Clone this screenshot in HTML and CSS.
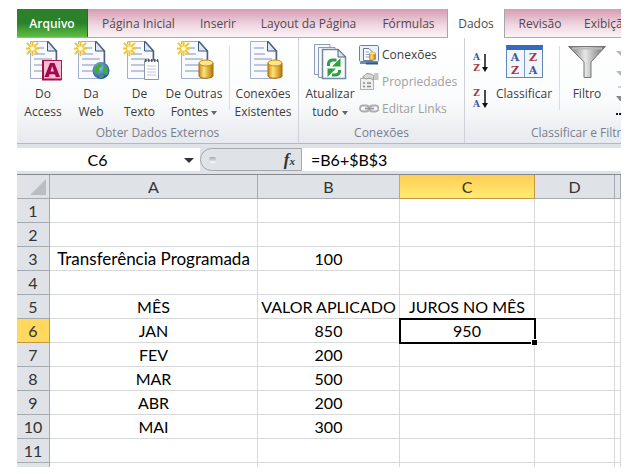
FILE: index.html
```html
<!DOCTYPE html>
<html lang="pt-BR">
  <head>
    <meta charset="utf-8">
    <title>Planilha</title>
    <link rel="stylesheet" href="styles.css">
  </head>
  <body>
    <!-- shared icon parts -->
    <svg class="defs" width="0" height="0" aria-hidden="true">
      <defs>
        <linearGradient id="gold" x1="0" x2="1" y1="0" y2="0">
          <stop offset="0" stop-color="#c98a10" />
          <stop offset="0.35" stop-color="#ffe27a" />
          <stop offset="1" stop-color="#b87405" />
        </linearGradient>
        <linearGradient id="steel" x1="0" x2="1" y1="0" y2="0">
          <stop offset="0" stop-color="#6e6e6e" />
          <stop offset="0.45" stop-color="#e8e8e8" />
          <stop offset="1" stop-color="#6a6a6a" />
        </linearGradient>
        <radialGradient id="sea" cx="0.4" cy="0.35" r="0.7">
          <stop offset="0" stop-color="#8cc4f4" />
          <stop offset="1" stop-color="#1b4a9c" />
        </radialGradient>
        <symbol id="sheet" viewBox="0 0 40 40">
          <path d="M7.500 0.500H25L33 9.500V37.500H7.500Z" fill="#f8fafd" stroke="#a3b1c8" />
          <path d="M25 0.500L33.500 10V37" fill="none" stroke="#4b6285" stroke-width="1.500" />
          <path d="M24.500 0.500V10H33Z" fill="#dfe7f2" stroke="#3f567a" />
          <path d="M11 7H21M11 13H22M11 18H29M11 24H29M11 30H29" stroke="#a9b7d0" stroke-width="1.600" />
        </symbol>
        <symbol id="spark" viewBox="0 0 16 16">
          <circle cx="8" cy="8" r="5" fill="#fff3a0" />
          <path d="M8 0V16M1 8H15M2 2L14 14M14 2L2 14" stroke="#f0c430" stroke-width="2" />
          <circle cx="8" cy="8" r="2.500" fill="#fffde8" />
        </symbol>
        <symbol id="cylinder" viewBox="0 0 16 20">
          <path d="M1 4V17C1 20 15 20 15 17V4Z" fill="url(#gold)" stroke="#a86c08" />
          <ellipse cx="8" cy="4" rx="7" ry="3" fill="#ffe58c" stroke="#c28a1c" />
        </symbol>
      </defs>
    </svg>

    <main class="window">
      <nav class="tabs" role="tablist">
        <button class="tab tab-file" role="tab">Arquivo</button>
        <button class="tab" role="tab">Página Inicial</button>
        <button class="tab" role="tab">Inserir</button>
        <button class="tab" role="tab">Layout da Página</button>
        <button class="tab" role="tab">Fórmulas</button>
        <button class="tab tab-active" role="tab" aria-selected="true">Dados</button>
        <button class="tab" role="tab">Revisão</button>
        <button class="tab" role="tab">Exibição</button>
      </nav>

      <div class="ribbon">
        <section class="group">
          <div class="group-body external">
            <button class="big">
              <svg class="icon" viewBox="0 0 40 40">
                <use href="#sheet" width="40" height="40" />
                <use href="#spark" x="2" y="0" width="15" height="15" />
                <rect x="19.500" y="19.500" width="19" height="19" fill="#f5bfd2" stroke="#b3124f" />
                <path d="M20 19.500V38.500H38.500" fill="none" stroke="#a50f48" stroke-width="2" />
                <path fill-rule="evenodd" d="M21.500 36L27 22H31.500L37 36H32.800L31.900 33.300H26.500L25.600 36ZM27.500 30.500H31L29.200 25Z" fill="#a3064a" />
              </svg>
              <span>Do<br>Access</span>
            </button>
            <button class="big">
              <svg class="icon" viewBox="0 0 40 40">
                <use href="#sheet" width="40" height="40" />
                <use href="#spark" x="2" y="0" width="15" height="15" />
                <circle cx="30" cy="29.500" r="8.500" fill="url(#sea)" />
                <path d="M24 26L29 22L31 25L28 28L29 31L26 33L23 30ZM33 24L37 27L37 33L34 34L32 29ZM28 35L32 34L33 36L29 37Z" fill="#45a83c" />
              </svg>
              <span>Da<br>Web</span>
            </button>
            <button class="big">
              <svg class="icon" viewBox="0 0 40 40">
                <use href="#sheet" width="40" height="40" />
                <use href="#spark" x="2" y="0" width="15" height="15" />
                <path d="M24.500 19.500H38.500V38.500H24.500Z" fill="#fff" stroke="#8b99ac" />
                <path d="M27 25H36M27 28H36M27 31H36M27 34H36" stroke="#bcc8d8" />
                <path d="M25 19.500H38" stroke="#555" stroke-width="3" stroke-dasharray="1.500 1.500" />
              </svg>
              <span>De<br>Texto</span>
            </button>
            <button class="big">
              <svg class="icon" viewBox="0 0 40 40">
                <use href="#sheet" width="40" height="40" />
                <use href="#spark" x="2" y="0" width="15" height="15" />
                <use href="#cylinder" x="24" y="18" width="16" height="20" />
              </svg>
              <span>De Outras<br>Fontes <i class="caret"></i></span>
            </button>
            <i class="divider"></i>
            <button class="big">
              <svg class="icon" viewBox="0 0 40 40">
                <use href="#sheet" width="40" height="40" />
                <use href="#cylinder" x="24" y="18" width="16" height="20" />
              </svg>
              <span>Conexões<br>Existentes</span>
            </button>
          </div>
          <h2 class="group-title">Obter Dados Externos</h2>
        </section>

        <section class="group">
          <div class="group-body links">
            <button class="big">
              <svg class="icon" viewBox="0 0 40 40">
                <path d="M4.500 3.500H20V33.500H4.500Z" fill="#f6f8fc" stroke="#8b9bb4" />
                <path d="M8.500 6.500H25V36.500H8.500Z" fill="#f6f8fc" stroke="#8b9bb4" />
                <path d="M12.500 8.500H28L35.500 16V37.500H12.500Z" fill="#fbfcff" stroke="#7487a5" stroke-width="1.500" />
                <path d="M28 8.500V16H35.500Z" fill="#dbe4f0" stroke="#4b6285" />
                <path d="M18.500 25V22.500Q19 19 23 19H26.500" fill="none" stroke="#2f9e3f" stroke-width="3" />
                <path d="M30.500 17V25.500H22Z" fill="#2f9e3f" />
                <path d="M29.500 29V30.500Q29 34 25 34H22" fill="none" stroke="#2f9e3f" stroke-width="3" />
                <path d="M17.500 36V27.500H26Z" fill="#2f9e3f" />
              </svg>
              <span>Atualizar<br>tudo <i class="caret"></i></span>
            </button>
            <div class="stack">
              <button class="small">
                <svg width="20" height="20" viewBox="0 0 20 20">
                  <rect x="0.500" y="0.500" width="19" height="16" rx="1" fill="#e9f1fb" stroke="#5f83b5" />
                  <path d="M1 18H19" stroke="#6f8db8" stroke-width="2" />
                  <path d="M7 17.500H19V19.500H7Z" fill="#34568a" />
                  <path d="M4.500 3.500H10L13.500 7V15.500H4.500Z" fill="#fff" stroke="#61779b" />
                  <path d="M6.500 7H10M6.500 9.500H10M6.500 12H10" stroke="#8fa2c0" />
                  <use href="#cylinder" x="10" y="6" width="7" height="10" />
                </svg>
                Conexões
              </button>
              <button class="small" disabled>
                <svg width="20" height="20" viewBox="0 0 20 20">
                  <path d="M1.500 6.500H14.500V17.500H1.500Z" fill="#efefef" stroke="#b0b0b0" />
                  <path d="M4 11H6M8 11H12M4 14.500H6M8 14.500H12" stroke="#8a8a8a" stroke-width="1.500" />
                  <path d="M3.500 5L8 1.500L12 2L15 4L14 8L11 6L7 7Z" fill="#d8d8d8" stroke="#9e9e9e" />
                  <path d="M15 1H19.500V8H15Z" fill="#c8c8c8" />
                </svg>
                Propriedades
              </button>
              <button class="small" disabled>
                <svg width="20" height="20" viewBox="0 0 20 20">
                  <rect x="1" y="6.500" width="9" height="6" rx="3" fill="none" stroke="#adadad" stroke-width="1.800" />
                  <rect x="10.500" y="6.500" width="9" height="6" rx="3" fill="none" stroke="#adadad" stroke-width="1.800" />
                  <path d="M6 9.500H15" stroke="#999" stroke-width="1.800" />
                </svg>
                Editar Links
              </button>
            </div>
          </div>
          <h2 class="group-title">Conexões</h2>
        </section>

        <section class="group">
          <div class="group-body sorting">
            <div class="sort-stack">
              <button class="sort" aria-label="Classificar de A a Z">
                <span class="az"><b class="blue">A</b><b class="red">Z</b></span>
                <svg width="6" height="18" viewBox="0 0 6 18"><path d="M3 0V16" stroke="#111" stroke-width="1.500" /><path d="M0 13H6L3 18Z" fill="#111" /></svg>
              </button>
              <button class="sort" aria-label="Classificar de Z a A">
                <span class="az"><b class="red">Z</b><b class="blue">A</b></span>
                <svg width="6" height="18" viewBox="0 0 6 18"><path d="M3 0V16" stroke="#111" stroke-width="1.500" /><path d="M0 13H6L3 18Z" fill="#111" /></svg>
              </button>
            </div>
            <button class="big">
              <span class="icon sort-icon">
                <span class="sort-card">
                  <span class="az az-big"><b class="blue">A</b><b class="red">Z</b></span>
                  <span class="az az-big"><b class="red">Z</b><b class="blue">A</b></span>
                </span>
              </span>
              <span>Classificar</span>
            </button>
            <i class="divider"></i>
            <button class="big">
              <svg class="icon" viewBox="0 0 40 40">
                <path d="M1.500 5.500H38.500L24 21V36.500H17V21Z" fill="url(#steel)" stroke="#777" />
                <path d="M5 7.500H35" stroke="#b9b9b9" stroke-width="2" />
              </svg>
              <span>Filtro</span>
            </button>
            <div class="filters">
              <button aria-label="Limpar"><svg width="20" height="18" viewBox="0 0 20 18"><path d="M0 2H16L10 9V16H7V9Z" fill="#b8b8b8" /></svg></button>
              <button aria-label="Reaplicar"><svg width="20" height="16" viewBox="0 0 20 16"><path d="M0 1H16L10 8V15H7V8Z" fill="#b8b8b8" /></svg></button>
              <button aria-label="Avançado"><svg width="20" height="30" viewBox="0 0 20 30"><path d="M2 1H16" stroke="#aaa" /><path d="M0 10H6V15H4Z" fill="#888" /><path d="M0 28H12" stroke="#111" stroke-width="2" stroke-dasharray="2 1" /></svg></button>
            </div>
          </div>
          <h2 class="group-title">Classificar e Filtrar</h2>
        </section>
      </div>

      <div class="formula-bar">
        <input class="name-box" aria-label="Caixa de nome" value="C6">
        <button class="name-drop" aria-label="Nomes"><i class="caret"></i></button>
        <div class="fx-area">
          <i class="grip"></i>
          <button class="fx" aria-label="Inserir função"><i>f</i><sub>x</sub></button>
        </div>
        <input class="formula" aria-label="Fórmula" value="=B6+$B$3">
      </div>

      <table class="grid">
        <colgroup>
          <col class="col-num"><col class="col-a"><col class="col-b"><col class="col-c"><col class="col-d"><col>
        </colgroup>
        <thead>
          <tr><th class="corner"><svg width="16" height="16" viewBox="0 0 16 16"><path d="M16 0V16H0Z" fill="#b9bec3" /></svg></th><th>A</th><th>B</th><th class="selected">C</th><th>D</th><th></th></tr>
        </thead>
        <tbody>
          <tr><th>1</th><td></td><td></td><td></td><td></td><td></td></tr>
          <tr><th>2</th><td></td><td></td><td></td><td></td><td></td></tr>
          <tr><th>3</th><td class="label">Transferência Programada</td><td>100</td><td></td><td></td><td></td></tr>
          <tr><th>4</th><td></td><td></td><td></td><td></td><td></td></tr>
          <tr><th>5</th><td>MÊS</td><td>VALOR APLICADO</td><td>JUROS NO MÊS</td><td></td><td></td></tr>
          <tr><th class="selected">6</th><td>JAN</td><td>850</td><td class="active">950</td><td></td><td></td></tr>
          <tr><th>7</th><td>FEV</td><td>200</td><td></td><td></td><td></td></tr>
          <tr><th>8</th><td>MAR</td><td>500</td><td></td><td></td><td></td></tr>
          <tr><th>9</th><td>ABR</td><td>200</td><td></td><td></td><td></td></tr>
          <tr><th>10</th><td>MAI</td><td>300</td><td></td><td></td><td></td></tr>
          <tr><th>11</th><td></td><td></td><td></td><td></td><td></td></tr>
          <tr><th></th><td></td><td></td><td></td><td></td><td></td></tr>
        </tbody>
      </table>
    </main>
  </body>
</html>
```
FILE: styles.css
```css
* {
  box-sizing: border-box;
}

body {
  margin: 0;
  height: 100vh;
  padding: 9px 9px 7px 17px;
  background: #fff;
  font-family: "Open Sans", "Noto Sans", sans-serif;
  font-size: 12px;
  color: #3c3c3c;
}

button {
  margin: 0;
  padding: 0;
  border: 0;
  background: none;
  font: inherit;
  color: inherit;
}

.defs {
  position: absolute;
}

.window {
  height: 100%;
  overflow: hidden;
}

/* tabs */
.tabs {
  display: grid;
  grid-template-columns: 71px 101px 58px 123px 77px 58px 70px 64px;
  height: 29px;
  background: linear-gradient(#d59db3, #f0d9e2 60%, #fbf3f6);
  border-bottom: 1px solid #a9adb3;
}

.tab {
  height: 28px;
  white-space: nowrap;
  color: #55474e;
}

.tab-file {
  background: linear-gradient(#2f7f2b, #2a8229 50%, #5fbf44);
  border-right: 1px solid #2b6b26;
  color: #fff;
  font-weight: 600;
}

.tab-active {
  height: 29px;
  background: #fff;
  border: solid #a9a4aa;
  border-width: 0 1px;
  color: #4a4a4a;
}

/* ribbon */
.ribbon {
  display: flex;
  height: 105px;
  background: linear-gradient(#fff, #fafbfc 60%, #e6e9ee);
}

.group {
  flex: none;
  display: flex;
  flex-direction: column;
  border-right: 1px solid #cdd2d9;
}

.group-body {
  display: grid;
  height: 86px;
}

.external {
  grid-template-columns: 48px 48px 49px 60px 10px 58px;
  padding: 0 6px 0 2px;
}

.links {
  grid-template-columns: 58px 105px;
  padding-left: 2px;
}

.sorting {
  grid-template-columns: 20px 62px 8px 48px 88px;
  padding-left: 8px;
}

.group-title {
  margin: 0;
  font-size: 12px;
  font-weight: 400;
  line-height: 18px;
  text-align: center;
  color: #77808e;
}

.big {
  display: flex;
  flex-direction: column;
  align-items: center;
  padding-top: 3px;
  line-height: 18px;
  white-space: nowrap;
}

.icon {
  width: 40px;
  height: 40px;
  margin-bottom: 4px;
}

.caret {
  display: inline-block;
  border: solid transparent;
  border-width: 4px 3px 0;
  border-top-color: #666;
  vertical-align: middle;
}

.divider {
  width: 1px;
  height: 64px;
  margin: 8px auto 0;
  background: #d9dce1;
}

.stack {
  display: grid;
  grid-template-rows: 27px 27px 27px;
  padding-top: 3px;
}

.small {
  display: flex;
  align-items: center;
  gap: 3px;
  white-space: nowrap;
}

.small:disabled {
  color: #a0a0a0;
}

.sort-stack {
  display: flex;
  flex-direction: column;
  gap: 14px;
  padding-top: 14px;
}

.sort {
  display: flex;
  align-items: center;
  gap: 2px;
}

.az {
  display: grid;
  font: 700 9px/11px "DejaVu Serif", serif;
  text-align: center;
}

.az-big {
  align-content: center;
  font-size: 11px;
  line-height: 13px;
  background: #f2f6fc;
}

.blue {
  color: #3c5a9e;
}

.red {
  color: #a23a42;
}

.sort-icon {
  padding-top: 4px;
}

.sort-card {
  display: grid;
  grid-template-columns: 1fr 1fr;
  gap: 1px;
  width: 37px;
  height: 33px;
  margin: 0 auto;
  border: 1px solid #5e86b8;
  border-top: 5px solid #3568c0;
  background: #7d9cc4;
}

.filters {
  display: grid;
  grid-template-rows: 23px 17px 30px;
  justify-items: start;
  align-content: start;
  padding: 8px 0 0 5px;
}

.filters svg {
  display: block;
}

/* formula bar */
.formula-bar {
  display: grid;
  grid-template-columns: 161px 22px 102px 1fr;
  height: 32px;
  padding: 4px 0 3px;
  border-top: 1px solid #b4b9c0;
  border-bottom: 1px solid #85888c;
  background: #dfe3e8;
}

.name-box,
.formula {
  min-width: 0;
  padding: 0;
  border: 0;
  background: #fff;
  font: 16px Lato, sans-serif;
  color: #000;
}

.name-box {
  text-align: center;
}

.formula {
  padding-left: 9px;
}

.name-drop {
  background: #fff;
}

.name-drop .caret {
  border-width: 5px 5px 0;
  border-top-color: #333;
}

.fx-area {
  display: flex;
  align-items: center;
  justify-content: space-between;
  padding: 0 6px 0 8px;
  border: 1px solid #a3a8ae;
  border-radius: 12px 0 0 12px;
  background: #dfe3e7;
}

.grip {
  width: 7px;
  height: 6px;
  border-radius: 2px;
  background: linear-gradient(#a4a8ad, #fff);
}

.fx {
  font: 700 17px/20px "Liberation Serif", serif;
  color: #333;
}

.fx sub {
  font-size: 11px;
  font-style: italic;
  line-height: 10px;
  vertical-align: baseline;
}

/* sheet */
.grid {
  width: 100%;
  table-layout: fixed;
  border-collapse: separate;
  border-spacing: 0;
  font: 16px/20px Lato, sans-serif;
  color: #000;
}

.col-num {
  width: 33px;
}

.col-a {
  width: 208px;
}

.col-b {
  width: 142px;
}

.col-c {
  width: 135px;
}

.col-d {
  width: 80px;
}

.grid th,
.grid td {
  height: 24px;
  padding: 0;
  border: solid #d6d8da;
  border-width: 0 1px 1px 0;
  text-align: center;
  white-space: nowrap;
}

.grid th {
  border-color: #a5aab0;
  background: #dfe2e7;
  font-weight: 400;
  color: #333;
}

.grid td.label {
  font-size: 17px;
}

.grid th.corner {
  padding-right: 3px;
  text-align: right;
  vertical-align: middle;
}

.corner svg {
  display: block;
  margin-left: auto;
}

.grid th.selected {
  border-color: #c8963c;
  background: #ffd95f;
}

.grid thead th.selected {
  background: linear-gradient(#ffcd55, #ffec72);
}

.grid td.active {
  position: relative;
  outline: 2px solid #000;
  outline-offset: -1px;
}

.active::after {
  content: "";
  position: absolute;
  right: -3px;
  bottom: -3px;
  width: 5px;
  height: 5px;
  border: solid #fff;
  border-width: 1px 0 0 1px;
  background: #000;
}
```
